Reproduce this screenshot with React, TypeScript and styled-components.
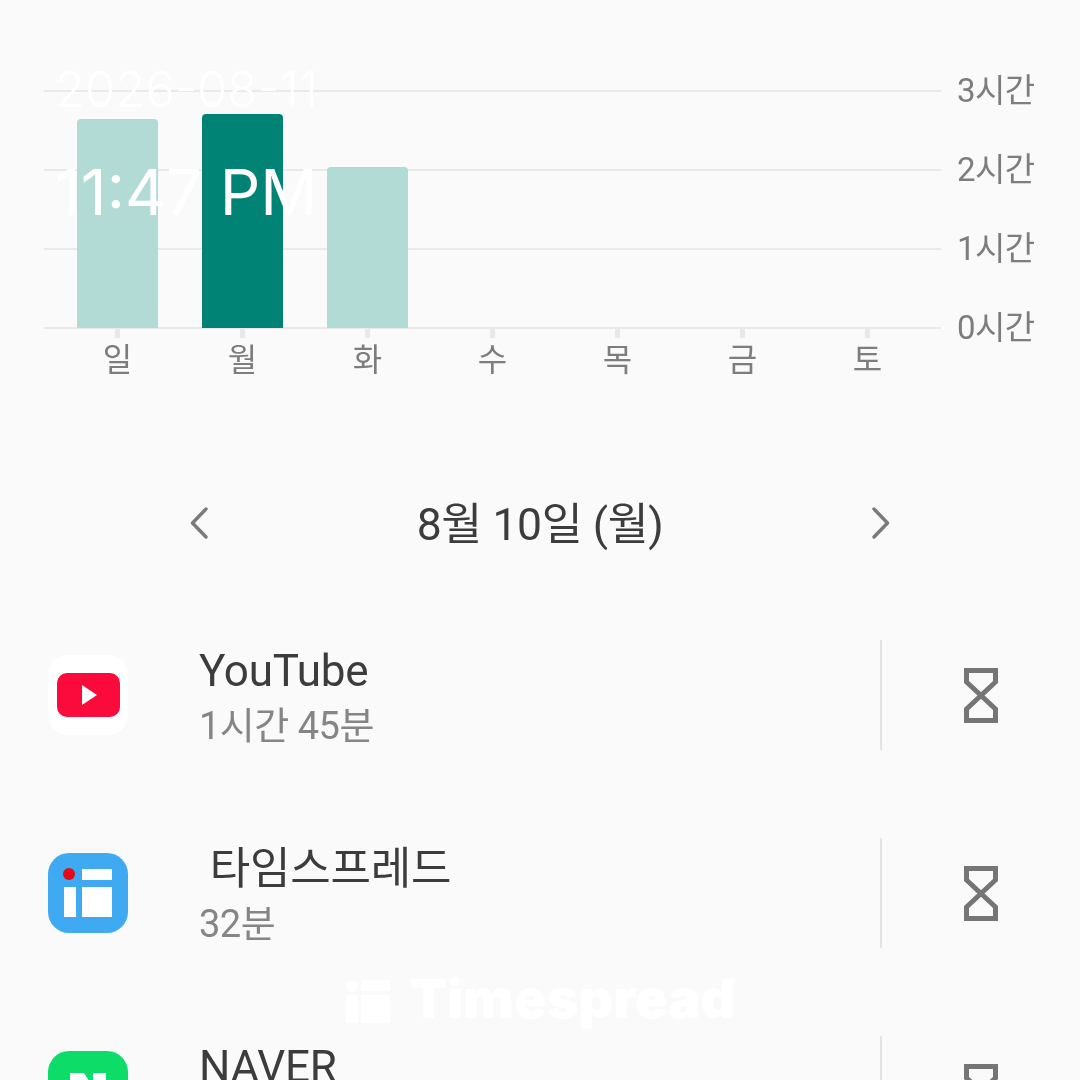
import React from "react";
import styled, { createGlobalStyle } from "styled-components";

const Global = createGlobalStyle`
  html, body { margin: 0; padding: 0; background: #fafafa; }
  body { font-family: Roboto, "Noto Sans CJK KR", sans-serif; }
`;

const Page = styled.div`
  position: relative;
  width: 1080px;
  height: 1080px;
  overflow: hidden;
  background: #fafafa;
  filter: blur(0.6px);
`;

const Chart = styled.section`
  position: relative;
  margin: 90px 0 0 44px;
  width: 1036px;
  height: 239px;
  display: flex;
  flex-direction: column;
  justify-content: space-between;
`;

const GridRow = styled.div`
  display: flex;
  align-items: center;
  height: 2px;
  gap: 16px;
`;

const GridLine = styled.div`
  width: 897px;
  height: 2px;
  background: #e9e9e9;
`;

const AxisLabel = styled.span`
  font-size: 33px;
  line-height: 40px;
  color: #7d7d7d;
  white-space: nowrap;
  letter-spacing: -0.6px;
`;

const Bars = styled.div`
  position: absolute;
  left: 11px;
  bottom: 1px;
  width: 875px;
  display: grid;
  grid-template-columns: repeat(7, 1fr);
  align-items: end;
`;

const Bar = styled.div<{ $h: number; $active?: boolean }>`
  justify-self: center;
  width: 81px;
  height: ${(p) => p.$h}px;
  border-radius: 4px 4px 0 0;
  background: ${(p) => (p.$active ? "#008375" : "#b2dbd6")};
`;

const Days = styled.div`
  margin-left: 55px;
  width: 875px;
  display: grid;
  grid-template-columns: repeat(7, 1fr);
`;

const Day = styled.div`
  display: flex;
  flex-direction: column;
  align-items: center;
`;

const Tick = styled.div`
  width: 5px;
  height: 9px;
  background: #e9e9e9;
`;

const DayLabel = styled.span`
  margin-top: 2px;
  font-size: 32px;
  line-height: 40px;
  color: #7d7d7d;
`;

const DateNav = styled.nav`
  margin: 113px 190px 0;
  height: 60px;
  display: flex;
  align-items: center;
  justify-content: space-between;
`;

const DateTitle = styled.span`
  font-size: 44.5px;
  line-height: 56px;
  margin-top: 3px;
  letter-spacing: -0.4px;
  color: #3c3c3c;
`;

const AppList = styled.div`
  margin-top: 87px;
  display: flex;
  flex-direction: column;
  gap: 88px;
`;

const AppRow = styled.div`
  height: 110px;
  padding-left: 48px;
  display: flex;
  align-items: center;
`;

const AppIconBox = styled.div`
  width: 80px;
  height: 80px;
  flex: none;
  display: flex;
`;

const AppText = styled.div`
  margin-left: 71px;
  margin-top: 5px;
  width: 681px;
  flex: none;
  display: flex;
  flex-direction: column;
`;

const AppName = styled.span`
  font-size: 44px;
  line-height: 57px;
  color: #3c3c3c;
  white-space: pre;
  letter-spacing: -0.2px;
`;

const AppTime = styled.span`
  font-size: 38px;
  line-height: 52px;
  min-height: 52px;
  color: #858585;
  letter-spacing: -0.5px;
`;

const Divider = styled.div`
  width: 2px;
  height: 110px;
  flex: none;
  background: #e3e3e3;
`;

const TimerCell = styled.div`
  width: 198px;
  flex: none;
  display: flex;
  justify-content: center;
`;

const Stamp = styled.div`
  position: absolute;
  left: 55px;
  color: #fff;
  white-space: nowrap;
  font-family: Inter, sans-serif;
  font-weight: 300;
`;

const StampDate = styled(Stamp)`
  top: 60px;
  font-size: 49px;
  line-height: 60px;
`;

const StampTime = styled(Stamp)`
  top: 154px;
  font-size: 63.5px;
  line-height: 76px;
  font-weight: 400;
`;

const Watermark = styled.div`
  position: absolute;
  left: 346px;
  top: 970px;
  display: flex;
  align-items: center;
  gap: 20px;
  color: #fff;
  font-family: Inter, sans-serif;
  font-weight: 900;
  font-size: 54px;
  line-height: 58px;
`;

const WatermarkMark = styled.div`
  display: flex;
  margin-top: 4px;
`;

const Hourglass = () => (
  <svg width="34" height="55" viewBox="0 0 34 55" fill="none" stroke="#757575" strokeWidth="5">
    <path d="M2.5 2.5H31.5V14L2.5 41V52.5H31.5V41L2.5 14Z" />
  </svg>
);

const Chevron = ({ dir }: { dir: "left" | "right" }) => (
  <svg width="18" height="32" viewBox="0 0 18 32" fill="none" stroke="#7a7a7a" strokeWidth="3.4" strokeLinecap="round" strokeLinejoin="round">
    <path d={dir === "left" ? "M16 2L2.5 16L16 30" : "M2 2L15.5 16L2 30"} />
  </svg>
);

const YouTubeIcon = () => (
  <svg width="80" height="80" viewBox="0 0 80 80">
    <rect width="80" height="80" rx="20" fill="#fff" />
    <rect x="9" y="18" width="63" height="44" rx="10" fill="#fb0a3c" />
    <path d="M34 30L49 40L34 50Z" fill="#fff" />
  </svg>
);

const SpreadIcon = () => (
  <svg width="80" height="80" viewBox="0 0 80 80">
    <rect width="80" height="80" rx="21" fill="#3fa9f1" />
    <circle cx="21" cy="21" r="6" fill="#e30b17" />
    <rect x="16" y="34" width="12" height="30" fill="#fff" />
    <rect x="34" y="16" width="30" height="11" fill="#fff" />
    <rect x="34" y="34" width="30" height="30" fill="#fff" />
  </svg>
);

const NaverIcon = () => (
  <svg width="80" height="80" viewBox="0 0 80 80">
    <rect width="80" height="80" rx="21" fill="#0edc68" />
    <path d="M22 22H36L45 36V22H58V58H45L35 43V58H22Z" fill="#fff" />
  </svg>
);

const WatermarkLogo = () => (
  <svg width="44" height="43" viewBox="0 0 44 43" fill="#fff">
    <circle cx="6" cy="6" r="6" />
    <rect y="15" width="12" height="28" />
    <rect x="15" width="29" height="11" />
    <rect x="15" y="15" width="29" height="28" />
  </svg>
);

const axis = ["3시간", "2시간", "1시간", "0시간"];
const bars = [
  { h: 209 },
  { h: 214, active: true },
  { h: 161 },
  { h: 0 },
  { h: 0 },
  { h: 0 },
  { h: 0 },
];
const days = ["일", "월", "화", "수", "목", "금", "토"];
const apps = [
  { name: "YouTube", time: "1시간 45분", icon: <YouTubeIcon /> },
  { name: " 타임스프레드", time: "32분", icon: <SpreadIcon /> },
  { name: "NAVER", time: "", icon: <NaverIcon /> },
];

export default function App() {
  return (
    <Page>
      <Global />
      <Chart>
        {axis.map((a) => (
          <GridRow key={a}>
            <GridLine />
            <AxisLabel>{a}</AxisLabel>
          </GridRow>
        ))}
        <Bars>
          {bars.map((b, i) => (
            <Bar key={i} $h={b.h} $active={b.active} />
          ))}
        </Bars>
      </Chart>
      <Days>
        {days.map((d) => (
          <Day key={d}>
            <Tick />
            <DayLabel>{d}</DayLabel>
          </Day>
        ))}
      </Days>
      <DateNav>
        <Chevron dir="left" />
        <DateTitle>8월 10일 (월)</DateTitle>
        <Chevron dir="right" />
      </DateNav>
      <AppList>
        {apps.map((a) => (
          <AppRow key={a.name}>
            <AppIconBox>{a.icon}</AppIconBox>
            <AppText>
              <AppName>{a.name}</AppName>
              <AppTime>{a.time}</AppTime>
            </AppText>
            <Divider />
            <TimerCell>
              <Hourglass />
            </TimerCell>
          </AppRow>
        ))}
      </AppList>
      <StampDate>2026-08-11</StampDate>
      <StampTime>11:47 PM</StampTime>
      <Watermark>
        <WatermarkMark>
          <WatermarkLogo />
        </WatermarkMark>
        Timespread
      </Watermark>
    </Page>
  );
}
